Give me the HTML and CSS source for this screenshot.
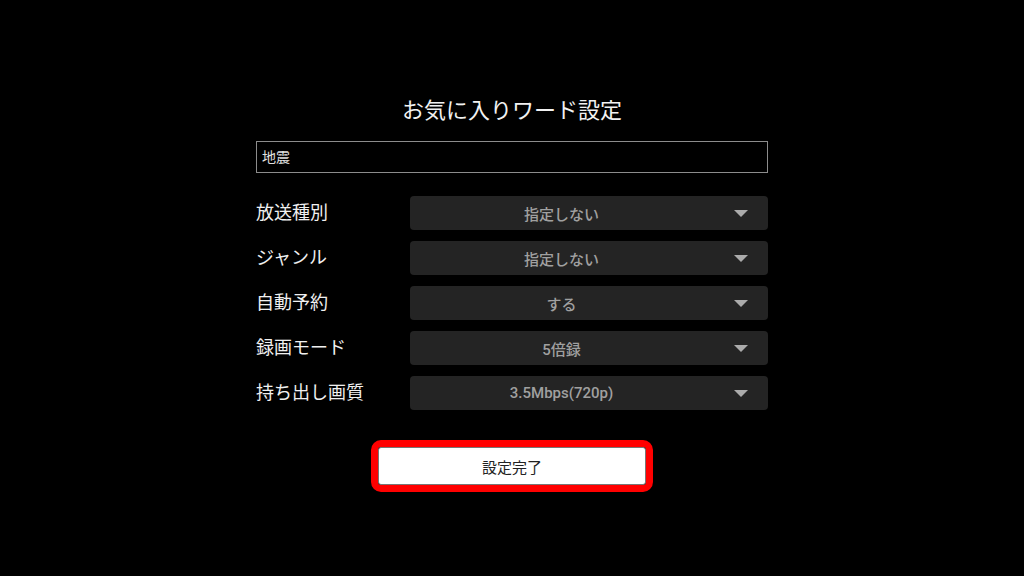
FILE: index.html
```html
<!DOCTYPE html>
<html lang="ja">
<head>
<meta charset="utf-8">
<title>お気に入りワード設定</title>
<link rel="stylesheet" href="styles.css">
</head>
<body>
<main class="panel">
  <h1 class="title">お気に入りワード設定</h1>
  <div class="keyword">地震</div>
  <div class="form">
    <div class="label">放送種別</div>
    <div class="select"><span class="value">指定しない</span><span class="arrow"></span></div>
    <div class="label">ジャンル</div>
    <div class="select"><span class="value">指定しない</span><span class="arrow"></span></div>
    <div class="label">自動予約</div>
    <div class="select"><span class="value">する</span><span class="arrow"></span></div>
    <div class="label">録画モード</div>
    <div class="select"><span class="value">5倍録</span><span class="arrow"></span></div>
    <div class="label">持ち出し画質</div>
    <div class="select"><span class="value">3.5Mbps(720p)</span><span class="arrow"></span></div>
  </div>
  <div class="actions">
    <div class="highlight">
      <button class="done" type="button">設定完了</button>
    </div>
  </div>
</main>
</body>
</html>
```
FILE: styles.css
```css
html, body {
  margin: 0;
  padding: 0;
  background: #000;
  height: 100%;
}
body {
  font-family: Roboto, "Noto Sans CJK JP", "Noto Sans", sans-serif;
  color: #eee;
}
.panel {
  width: 512px;
  margin: 0 auto;
  padding-top: 95px;
  display: flex;
  flex-direction: column;
}
.title {
  margin: 0;
  font-size: 22px;
  font-weight: 400;
  line-height: 32px;
  text-align: center;
  color: #f2f2f2;
}
.keyword {
  margin-top: 14px;
  height: 32px;
  box-sizing: border-box;
  border: 1px solid #8c8c8c;
  padding: 0 5px;
  font-size: 14px;
  line-height: 30px;
  color: #e0e0e0;
}
.form {
  margin-top: 23px;
  display: grid;
  grid-template-columns: 154px 1fr;
  row-gap: 11px;
  align-items: center;
}
.label {
  font-size: 18px;
  line-height: 34px;
  color: #f0f0f0;
}
.select {
  height: 34px;
  background: #242424;
  border-radius: 4px;
  display: flex;
  align-items: center;
  padding-right: 20px;
}
.value {
  flex: 1;
  text-align: center;
  padding-right: 21px;
  font-size: 15px;
  font-weight: 500;
  color: #a0a0a0;
}
.arrow {
  width: 0;
  height: 0;
  border-left: 7px solid transparent;
  border-right: 7px solid transparent;
  border-top: 7px solid #ababab;
}
.actions {
  margin-top: 30px;
  display: flex;
  justify-content: center;
}
.highlight {
  border: 7px solid #ff0000;
  border-radius: 10px;
  width: 268px;
}
.done {
  display: block;
  width: 100%;
  height: 38px;
  margin: 0;
  background: #fff;
  border: 1px solid #777;
  border-radius: 3px;
  font-family: Roboto, "Noto Sans CJK JP", sans-serif;
  font-size: 15px;
  color: #222;
  padding: 0;
}
```
